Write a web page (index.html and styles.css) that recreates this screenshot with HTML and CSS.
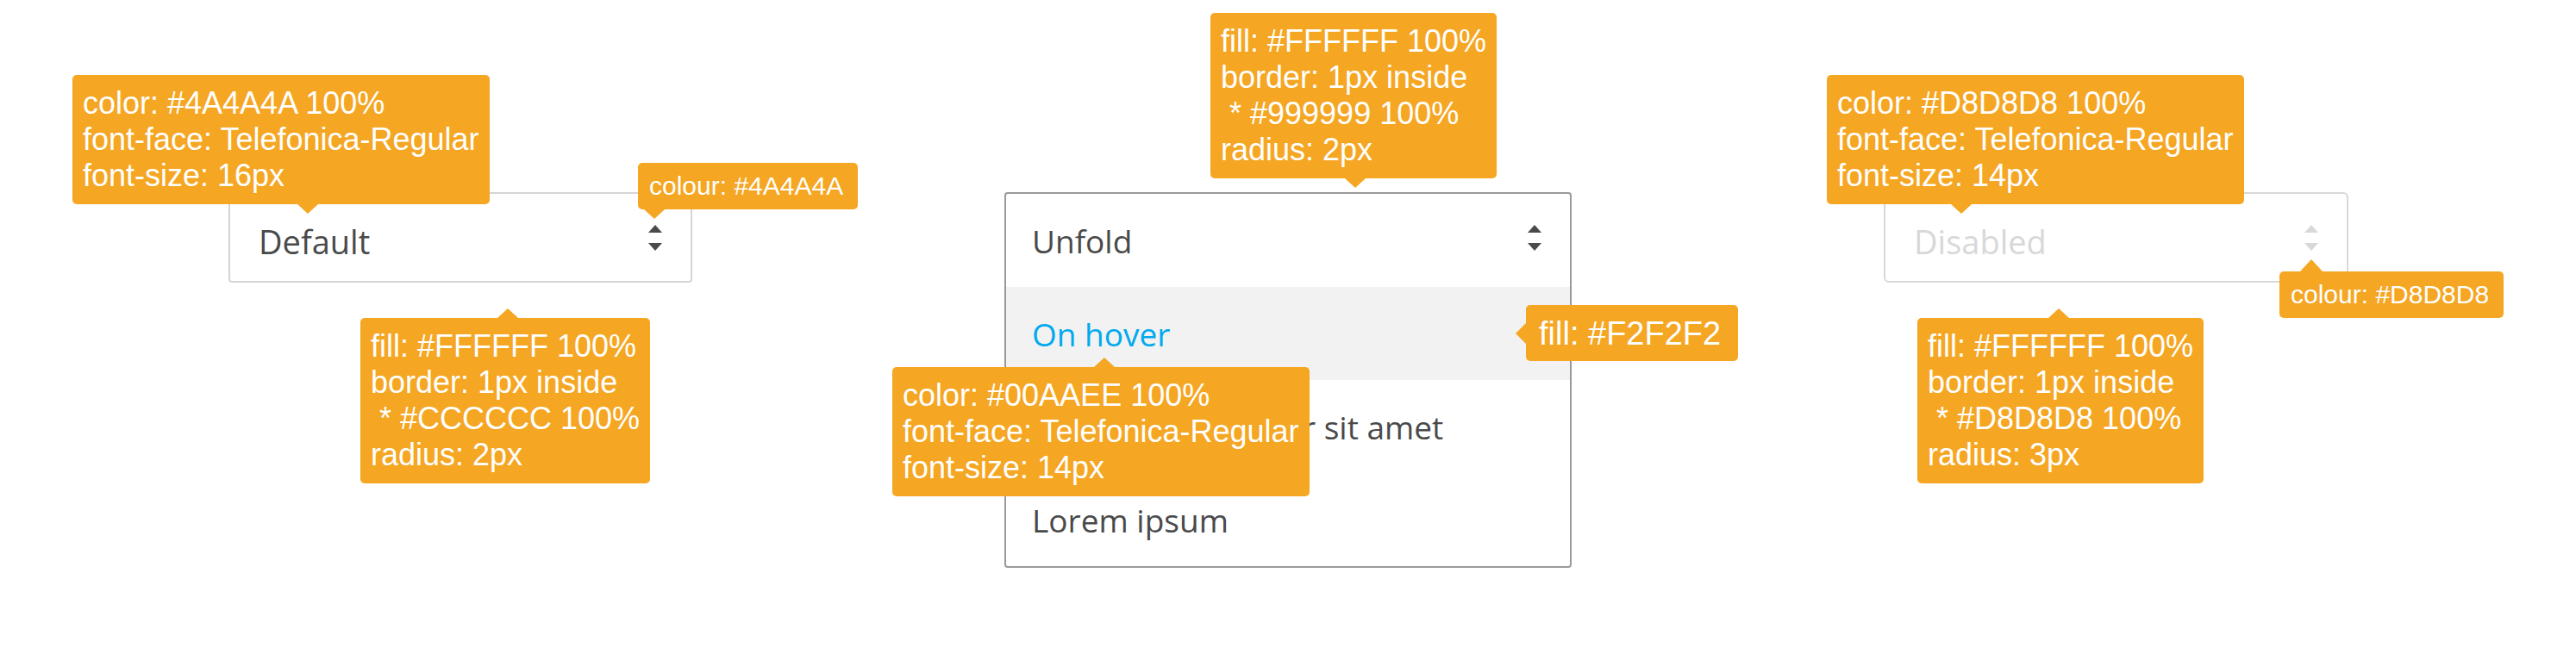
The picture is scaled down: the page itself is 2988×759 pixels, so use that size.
FILE: index.html
```html
<!DOCTYPE html>
<html lang="en">
<head>
<meta charset="utf-8">
<title>Select specs</title>
<link rel="stylesheet" href="styles.css">
</head>
<body>
<div class="board">
  <div class="spec spec-default">
    <div class="select select-closed">
      <div class="row">
        <span class="label">Default</span>
        <svg class="chev" viewBox="0 0 16 30"><polygon points="0,9 8,0 16,9"/><polygon points="0,21 16,21 8,30"/></svg>
      </div>
    </div>
    <div class="tip down t1">color: #4A4A4A 100%<br>font-face: Telefonica-Regular<br>font-size: 16px</div>
    <div class="tip tip-sm down t2">colour: #4A4A4A</div>
    <div class="tip up t3">fill: #FFFFFF 100%<br>border: 1px inside<br>&nbsp;* #CCCCCC 100%<br>radius: 2px</div>
  </div>

  <div class="spec spec-open">
    <div class="select select-open">
      <div class="row">
        <span class="label">Unfold</span>
        <svg class="chev" viewBox="0 0 16 30"><polygon points="0,9 8,0 16,9"/><polygon points="0,21 16,21 8,30"/></svg>
      </div>
      <div class="row hover"><span class="label">On hover</span></div>
      <div class="row"><span class="label">Lorem ipsum dolor sit amet</span></div>
      <div class="row"><span class="label">Lorem ipsum</span></div>
    </div>
    <div class="tip down t4">fill: #FFFFFF 100%<br>border: 1px inside<br>&nbsp;* #999999 100%<br>radius: 2px</div>
    <div class="tip left t5">fill: #F2F2F2</div>
    <div class="tip up t6">color: #00AAEE 100%<br>font-face: Telefonica-Regular<br>font-size: 14px</div>
  </div>

  <div class="spec spec-disabled">
    <div class="select select-closed select-disabled">
      <div class="row">
        <span class="label">Disabled</span>
        <svg class="chev" viewBox="0 0 16 30"><polygon points="0,9 8,0 16,9"/><polygon points="0,21 16,21 8,30"/></svg>
      </div>
    </div>
    <div class="tip down t7">color: #D8D8D8 100%<br>font-face: Telefonica-Regular<br>font-size: 14px</div>
    <div class="tip tip-sm up t8">colour: #D8D8D8</div>
    <div class="tip up t9">fill: #FFFFFF 100%<br>border: 1px inside<br>&nbsp;* #D8D8D8 100%<br>radius: 3px</div>
  </div>
</div>
</body>
</html>
```
FILE: styles.css
```css
html, body {
  margin: 0;
  background: #ffffff;
}

.board {
  display: flex;
  align-items: flex-start;
  gap: 362px;
  padding: 223px 0 0 265px;
  height: 759px;
  box-sizing: border-box;
  overflow: hidden;
}

.spec {
  position: relative;
  flex: none;
}

.spec-default { width: 538px; }
.spec-open { width: 658px; }
.spec-disabled { width: 539px; }

.select {
  box-sizing: border-box;
  border: 2px solid #d5d5d5;
  border-radius: 4px;
  background: #ffffff;
  font-family: "Open Sans", "Noto Sans", sans-serif;
  font-size: 37px;
  color: #4a4a4a;
}

.select-closed {
  height: 105px;
}

.select-open {
  border-color: #999999;
}

.select-disabled {
  border-color: #d8d8d8;
  border-radius: 6px;
  color: #d8d8d8;
}

.row {
  display: flex;
  justify-content: space-between;
  align-items: flex-start;
  height: 108px;
  box-sizing: border-box;
  padding: 0 33px 0 30px;
}

.select-closed .row {
  height: 101px;
  padding-left: 33px;
}

.row.hover {
  background: #f2f2f2;
  color: #00aaee;
}

.label {
  line-height: 50px;
  padding-top: 30px;
  white-space: nowrap;
}

.select-closed .label {
  font-size: 38px;
}

.chev {
  flex: none;
  width: 16px;
  height: 30px;
  margin-top: 36px;
  fill: #4a4a4a;
}

.select-disabled .chev {
  fill: #d8d8d8;
}

/* annotation tooltips */
.tip {
  position: absolute;
  background: #f5a623;
  color: #ffffff;
  font-family: "Liberation Sans", Arial, sans-serif;
  font-size: 36px;
  line-height: 42px;
  padding: 12px;
  border-radius: 5px;
  white-space: nowrap;
}

.tip-sm {
  font-size: 30px;
  line-height: 36px;
  padding: 9px 17px 9px 13px;
}

.tip::after {
  content: "";
  position: absolute;
  width: 0;
  height: 0;
  border: 12px solid transparent;
}

.down::after {
  top: 100%;
  left: calc(var(--ax) - 12px);
  border-top: 11px solid #f5a623;
  border-bottom: 0;
}

.up::after {
  bottom: 100%;
  left: calc(var(--ax) - 12px);
  border-bottom: 11px solid #f5a623;
  border-top: 0;
}

.left::after {
  right: 100%;
  top: calc(50% - 12px);
  border-right: 12px solid #f5a623;
  border-left: 0;
}

.t1 { left: -181px; top: -136px; --ax: 273px; }
.t2 { left: 475px; top: -34px; --ax: 19px; }
.t3 { left: 153px; top: 146px; --ax: 171px; }

.t4 { left: 239px; top: -208px; --ax: 168px; }
.t5 {
  left: 605px;
  top: 131px;
  font-size: 38px;
  padding: 12px 20px 11px 15px;
}
.t6 { left: -130px; top: 203px; --ax: 246px; }

.t7 { left: -66px; top: -136px; --ax: 156px; }
.t8 { left: 459px; top: 92px; --ax: 37px; }
.t9 { left: 39px; top: 146px; --ax: 164px; }

.t8::after {
  left: calc(var(--ax) - 13px);
  border-left-width: 13px;
  border-right-width: 13px;
  border-bottom-width: 14px;
}
```
